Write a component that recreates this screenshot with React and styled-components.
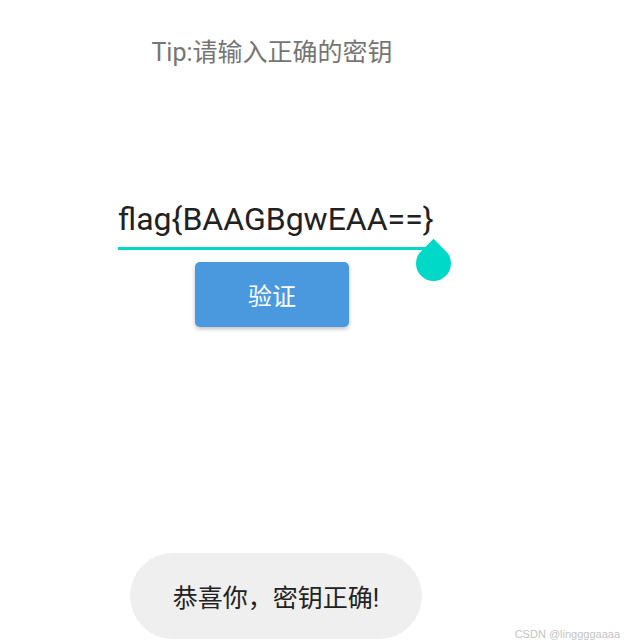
import React from "react";
import styled, { createGlobalStyle } from "styled-components";

const GlobalStyle = createGlobalStyle`
  html, body {
    margin: 0;
    padding: 0;
    background: #ffffff;
  }
  body {
    font-family: Roboto, "Noto Sans CJK SC", sans-serif;
  }
`;

const Page = styled.div`
  position: relative;
  width: 628px;
  height: 644px;
  overflow: hidden;
  background: #ffffff;
`;

const Column = styled.div`
  width: 544px;
  height: 100%;
  display: flex;
  flex-direction: column;
  align-items: center;
`;

const Tip = styled.p`
  margin: 38px 0 0;
  font-size: 25px;
  line-height: 30px;
  color: #757575;
`;

const Field = styled.div`
  position: relative;
  align-self: flex-start;
  width: 314px;
  margin: 131px 0 0 118px;
  border-bottom: 3px solid #00d8c8;
`;

const FieldText = styled.div`
  font-size: 32px;
  line-height: 40px;
  color: #212121;
  padding-bottom: 8px;
  white-space: nowrap;
`;

const Handle = styled.div`
  position: absolute;
  left: 298px;
  top: calc(100% - 1px);
  width: 35px;
  height: 35px;
  background: #00d8c8;
  border-radius: 0 50% 50% 50%;
  transform: rotate(45deg);
`;

const Button = styled.button`
  width: 154px;
  height: 65px;
  margin-top: 12px;
  border: none;
  border-radius: 5px;
  background: #4a99df;
  color: #ffffff;
  font-family: Roboto, "Noto Sans CJK SC", sans-serif;
  font-size: 24px;
  box-shadow: 0 2px 4px rgba(0, 0, 0, 0.25);
`;

const Spacer = styled.div`
  flex: 1;
`;

const Toast = styled.div`
  align-self: flex-start;
  width: 292px;
  height: 86px;
  margin: 0 0 5px 130px;
  border-radius: 43px;
  background: #efefef;
  display: flex;
  align-items: center;
  justify-content: center;
  font-size: 25px;
  color: #222222;
`;

const Watermark = styled.span`
  position: absolute;
  right: 8px;
  bottom: 4px;
  font-family: "Liberation Sans", sans-serif;
  font-size: 11px;
  color: #c4c4c4;
`;

export default function App() {
  return (
    <Page>
      <GlobalStyle />
      <Column>
        <Tip>Tip:请输入正确的密钥</Tip>
        <Field>
          <FieldText>flag{"{"}BAAGBgwEAA=={"}"}</FieldText>
          <Handle />
        </Field>
        <Button>验证</Button>
        <Spacer />
        <Toast>恭喜你，密钥正确!</Toast>
      </Column>
      <Watermark>CSDN @linggggaaaa</Watermark>
    </Page>
  );
}
